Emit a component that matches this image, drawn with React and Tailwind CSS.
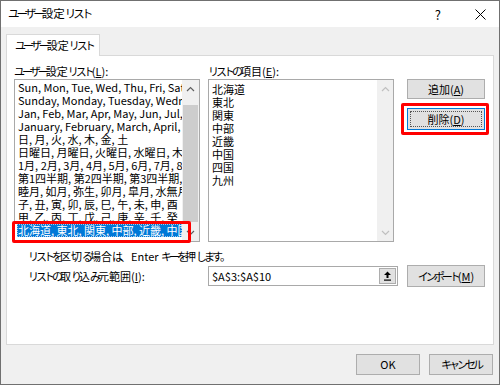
import React from 'react';

const leftRows = [
  'Sun, Mon, Tue, Wed, Thu, Fri, Sat',
  'Sunday, Monday, Tuesday, Wednesday, Thursday',
  'Jan, Feb, Mar, Apr, May, Jun, Jul, Aug',
  'January, February, March, April, May',
  '日, 月, 火, 水, 木, 金, 土',
  '日曜日, 月曜日, 火曜日, 水曜日, 木曜日',
  '1月, 2月, 3月, 4月, 5月, 6月, 7月, 8月',
  '第1四半期, 第2四半期, 第3四半期, 第4四半期',
  '睦月, 如月, 弥生, 卯月, 皐月, 水無月',
  '子, 丑, 寅, 卯, 辰, 巳, 午, 未, 申, 酉',
  '甲, 乙, 丙, 丁, 戊, 己, 庚, 辛, 壬, 癸',
];

const rightRows = ['北海道', '東北', '関東', '中部', '近畿', '中国', '四国', '九州'];

// kana are narrower in the dialog font, so tighten them
const J = ({ t }) =>
  t.split(/([\u3040-\u30ff]+)/).map((s, i) =>
    /[\u3040-\u30ff]/.test(s) ? (
      <span key={i} className="tracking-[-3px]">{s}</span>
    ) : (
      s
    )
  );

// label text with an underlined access key: "リスト(L):"
const Key = ({ pre, k, post = '' }) => (
  <>
    <J t={pre} />(<span className="underline">{k}</span>){post}
  </>
);

const Chevron = ({ up, color = '#606060' }) => (
  <svg width="9" height="6" viewBox="0 0 9 6">
    <path d={up ? 'M1 5 L4.5 1.5 L8 5' : 'M1 1 L4.5 4.5 L8 1'} fill="none" stroke={color} strokeWidth="1.2" />
  </svg>
);

const Btn = ({ children, className = '' }) => (
  <div className={`flex items-center justify-center whitespace-nowrap bg-[#e1e1e1] border border-[#adadad] ${className}`}>
    {children}
  </div>
);

export default function App() {
  return (
    <div className="w-[500px] h-[385px] flex flex-col border border-[#707070] bg-[#f0f0f0] text-[11px] leading-none text-black font-['Noto_Sans_CJK_JP',sans-serif]">
      {/* title bar */}
      <div className="h-[26px] bg-white flex items-center pl-[7px] shrink-0">
        <span className="text-[11.5px]"><J t="ユーザー設定リスト" /></span>
        <span className="ml-auto mr-[34px] text-[13px]">?</span>
        <svg width="11" height="11" viewBox="0 0 11 11" className="mr-[13px]">
          <path d="M0.5 0.5 L10.5 10.5 M10.5 0.5 L0.5 10.5" stroke="#000" strokeWidth="1" />
        </svg>
      </div>

      <div className="flex-1 flex flex-col px-[5px]">
        {/* tab */}
        <div className="mt-[7px] h-[21px] flex">
          <div className="w-[94px] h-[22px] bg-white border border-b-0 border-[#d9d9d9] flex items-center pl-[8px] whitespace-nowrap relative z-10">
            <J t="ユーザー設定リスト" />
          </div>
        </div>

        {/* panel */}
        <div className="h-[290px] bg-white border border-[#d9d9d9] px-[7px] pt-[8px] flex flex-col">
          <div className="flex">
            {/* left list */}
            <div className="flex flex-col w-[186px]">
              <div className="h-[15px] flex items-center whitespace-nowrap"><Key pre="ユーザー設定リスト" k="L" post=":" /></div>
              <div className="relative h-[163px] border border-[#a9a9a9] flex">
                <div className="flex-1 overflow-hidden pl-[2px] pt-[1px]">
                  {leftRows.map((r) => (
                    <div key={r} className="h-[13px] leading-[13px] whitespace-nowrap pl-[1px]">{r}</div>
                  ))}
                  <div className="h-[13px] leading-[13px] whitespace-nowrap bg-[#0078d7] text-white pl-[1px] outline outline-1 outline-dotted outline-[#9fc8ef] -outline-offset-1">
                    北海道, 東北, 関東, 中部, 近畿, 中国, 四国, 九州
                  </div>
                </div>
                <div className="w-[17px] bg-[#f0f0f0] flex flex-col items-center">
                  <div className="h-[17px] flex items-center justify-center"><Chevron up /></div>
                  <div className="h-[8px]" />
                  <div className="w-[15px] h-[117px] bg-[#cdcdcd]" />
                  <div className="flex-1" />
                  <div className="h-[17px] flex items-center justify-center"><Chevron /></div>
                </div>
                <div className="absolute left-[-3px] top-[141px] w-[179px] h-[22px] border-[3px] border-[#ff0000] rounded-[2px]" />
              </div>
            </div>

            {/* right list */}
            <div className="flex flex-col w-[186px] ml-[8px]">
              <div className="h-[15px] flex items-center whitespace-nowrap"><Key pre="リストの項目" k="E" post=":" /></div>
              <div className="h-[163px] border border-[#a9a9a9] flex">
                <div className="flex-1 pl-[3px] pt-[3px]">
                  {rightRows.map((r) => (
                    <div key={r} className="h-[13px] leading-[13px]">{r}</div>
                  ))}
                </div>
                <div className="w-[16px] bg-[#f0f0f0] flex flex-col items-center justify-between">
                  <div className="h-[17px] flex items-center justify-center"><Chevron up color="#c0c0c0" /></div>
                  <div className="h-[17px] flex items-center justify-center"><Chevron color="#c0c0c0" /></div>
                </div>
              </div>
            </div>

            {/* buttons */}
            <div className="flex flex-col ml-[13px] pt-[15px]">
              <Btn className="w-[78px] h-[20px]"><Key pre="追加" k="A" /></Btn>
              <div className="relative mt-[9px]">
                <div className="w-[78px] h-[22px] p-[2px] bg-[#e1e1e1] border border-[#0078d7]">
                  <div className="h-full flex items-center justify-center whitespace-nowrap border border-dotted border-[#555]">
                    <Key pre="削除" k="D" />
                  </div>
                </div>
                <div className="absolute -left-[6px] -top-[5px] w-[88px] h-[32px] border-[3px] border-[#ff0000] rounded-[2px]" />
              </div>
            </div>
          </div>

          <div className="mt-[7px] ml-[14px] h-[14px] flex items-center whitespace-pre">
            <J t="リストを区切る場合は、Enter キーを押します。" />
          </div>
          <div className="mt-[2px] h-[22px] flex items-center">
            <div className="w-[194px] pl-[14px] whitespace-nowrap"><Key pre="リストの取り込み元範囲" k="I" post=":" /></div>
            <div className="w-[190px] h-[20px] border border-[#a9a9a9] flex items-center">
              <span className="pl-[3px] flex-1">$A$3:$A$10</span>
              <div className="w-[17px] h-[16px] mr-[1px] bg-[#e1e1e1] border border-[#adadad] flex items-center justify-center">
                <svg width="9" height="10" viewBox="0 0 9 10">
                  <path d="M4.5 0.5 L8 4 L5.5 4 L5.5 7 L3.5 7 L3.5 4 L1 4 Z" fill="#000" />
                  <rect x="1" y="8.5" width="7" height="1.2" fill="#000" />
                </svg>
              </div>
            </div>
            <Btn className="ml-[9px] w-[78px] h-[22px]"><Key pre="インポート" k="M" /></Btn>
          </div>
        </div>

        {/* footer */}
        <div className="mt-[9px] flex justify-end gap-[9px] pr-[1px]">
          <Btn className="w-[64px] h-[21px]">OK</Btn>
          <Btn className="w-[64px] h-[21px]"><J t="キャンセル" /></Btn>
        </div>
      </div>
    </div>
  );
}
